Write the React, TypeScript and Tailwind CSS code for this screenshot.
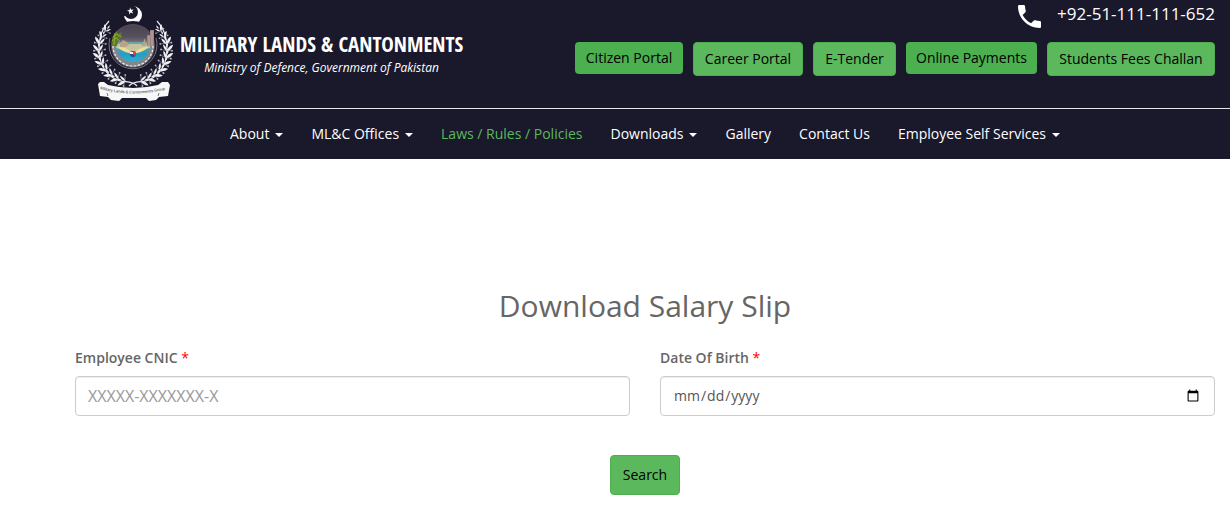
import type { ReactNode } from "react";

const portals = [
  { label: "Citizen Portal", flat: true, width: "min-w-[108px]" },
  { label: "Career Portal", flat: false, width: "min-w-[110px]" },
  { label: "E-Tender", flat: false, width: "min-w-[83px]" },
  { label: "Online Payments", flat: true, width: "min-w-[131px]" },
  { label: "Students Fees Challan", flat: false, width: "min-w-[168px]" },
];

const menu = [
  { label: "About", dropdown: true },
  { label: "ML&C Offices", dropdown: true },
  { label: "Laws / Rules / Policies", active: true },
  { label: "Downloads", dropdown: true },
  { label: "Gallery" },
  { label: "Contact Us" },
  { label: "Employee Self Services", dropdown: true },
];

const sprigs = Array.from({ length: 10 }, (_, i) => {
  const angle = 104 + i * 12.5;
  const rad = (angle * Math.PI) / 180;
  return {
    x: 42 + Math.cos(rad) * 34,
    y: 46 + Math.sin(rad) * 32,
    angle: angle + 90,
    size: i > 7 ? 0.8 : 1,
  };
});

const Branch = () => (
  <g>
    <path
      d="M46 82C40 75 32 80 24 75C12 68 8 56 8 45C8 35 11 24 18 17"
      fill="none"
      stroke="#e8e8ee"
      strokeWidth="1.200"
    />
    {sprigs.map(({ x, y, angle, size }, i) => (
      <g key={i} transform={`translate(${x} ${y}) rotate(${angle}) scale(${size})`} fill="#f1f1f5">
        <path d="M-1 0Q1 -5 6 -6Q5 -1 -1 0Z" />
        <path d="M-1 0Q2 4 6 4Q4 0 -1 0Z" />
        <path d="M3 0Q6 -2 9 0Q6 2 3 0Z" />
        <circle cx="0" cy="-5" r="1" fill="#b9b8c2" />
        <circle cx="1" cy="6" r="0.900" fill="#b9b8c2" />
        <path d="M0 0L0 -5M0 0L1 6" stroke="#b9b8c2" strokeWidth="0.500" />
      </g>
    ))}
  </g>
);

const Emblem = () => (
  <svg viewBox="0 0 84 100" className="h-[100px] w-[84px] shrink-0" aria-hidden="true">
    <defs>
      <clipPath id="disc">
        <circle cx="42" cy="42" r="21" />
      </clipPath>
      <clipPath id="basin">
        <circle cx="42" cy="41" r="17" />
      </clipPath>
      <linearGradient id="sky" x1="0" y1="0" x2="0" y2="1">
        <stop offset="0" stopColor="#4b4150" />
        <stop offset="0.600" stopColor="#57505e" />
        <stop offset="1" stopColor="#8d8e94" />
      </linearGradient>
      <linearGradient id="water" x1="0" y1="0" x2="0" y2="1">
        <stop offset="0" stopColor="#76a5ad" />
        <stop offset="0.500" stopColor="#249fc4" />
        <stop offset="1" stopColor="#38b4d3" />
      </linearGradient>
    </defs>
    <circle cx="42" cy="11" r="9" fill="#fff" />
    <circle cx="40" cy="8" r="7" fill="#1a182b" />
    <path d="M33 2h10v3H33zM32 3h4v9h-4z" fill="#1a182b" />
    <path
      d="M39 3.500l1.200 2.300 2.600-.4-1.800 1.900 1.200 2.300-2.400-1.100-1.800 1.900.3-2.600-2.300-1.200 2.600-.5z"
      fill="#fff"
    />
    <Branch />
    <g transform="translate(84 0) scale(-1 1)">
      <Branch />
    </g>
    <circle cx="42" cy="42" r="25" fill="#1a182b" />
    <path d="M19 34A24 24 0 1 0 65 34" fill="none" stroke="#77757e" strokeWidth="1" />
    <circle cx="42" cy="42" r="22" fill="#55505c" />
    <g clipPath="url(#disc)">
      <rect x="20" y="20" width="44" height="22" fill="url(#sky)" />
      <rect x="20" y="42" width="44" height="24" fill="#85868c" />
    </g>
    <path
      d="M22 42A20 20 0 0 0 62 42"
      fill="none"
      stroke="#eee"
      strokeWidth="1.200"
      strokeDasharray="2.500 1.500"
    />
    <g clipPath="url(#basin)">
      <rect x="24" y="38" width="36" height="24" fill="url(#water)" />
      <path d="M25 40h34v4l-10 2-7 2-8-2-9-2z" fill="#c8c4a0" />
      <path d="M29 39l3-3 4 2 2 3-4 2h-5zM50 42l2-3 2-5 1 8z" fill="#b7a389" />
    </g>
    <path d="M27 43q8 0 13 5h4q5-5 13-5-3 4-11 6h-8q-8-2-11-6z" fill="#efdf91" />
    <path d="M21 42c-1-7 1-12 5-15l1 3 4-2-1 3 2 2-4 1-2 8z" fill="#5f7b27" />
    <path d="M22 33l4-3 4 3M21 37l4-3 4 3M24 29l-1 12" fill="none" stroke="#91a63a" strokeWidth="1" />
    <path d="M56 42V31h3v-5h4v16z" fill="#9b817f" />
    <path d="M58 32v10M61 27v15" stroke="#c7a8a0" strokeWidth="1" />
    <circle cx="42" cy="50" r="3" fill="#254a9f" />
    <path d="M42 47a3 3 0 0 1 2 5l-2-2z" fill="#d84942" />
    <path d="M39 48h3v2h-3z" fill="#f3f3f3" />
    <path d="M9 78h4l4 3q25 6 50 0l4-3h6l2 3-2 11-9 1-3 3-7 1-3-3H31l-3 3-8-1-3-3-8-1-2-12z" fill="#f7f7f7" />
    <path d="M17 92l-1-3M67 92l1-3" stroke="#777580" strokeWidth="1" />
    <path id="motto" d="M9 85q33 9 68 0" fill="none" />
    <text fontSize="4" fill="#333" fontFamily="Liberation Sans">
      <textPath href="#motto">Military Lands &amp; Cantonments Group</textPath>
    </text>
  </svg>
);

const PhoneIcon = () => (
  <svg viewBox="3 3 18 18" className="h-[23px] w-[23px]" fill="#fff" aria-hidden="true">
    <path d="M6.620 10.790c1.440 2.830 3.760 5.140 6.590 6.590l2.200-2.200c.27-.27.67-.36 1.020-.24 1.120.37 2.330.57 3.570.57.55 0 1 .45 1 1V20c0 .55-.45 1-1 1-9.390 0-17-7.610-17-17 0-.55.45-1 1-1h3.500c.55 0 1 .45 1 1 0 1.250.2 2.450.57 3.570.11.35.03.74-.25 1.020l-2.200 2.200z" />
  </svg>
);

const Field = ({ id, label, children }: { id: string; label: string; children: ReactNode }) => (
  <div>
    <label htmlFor={id} className="mb-2 block text-sm leading-5 font-semibold">
      {label} <span className="font-normal text-[#ff0000]">*</span>
    </label>
    {children}
  </div>
);

const inputStyle =
  "block h-10 w-full rounded border border-[#ccc] bg-white px-3 text-[#555] shadow-[inset_0_1px_1px_rgba(0,0,0,0.075)] placeholder:text-[#999]";

export default function App() {
  return (
    <div className="bg-white font-['Open_Sans',sans-serif] text-[#666]">
      <header className="bg-[#1a182b] text-white">
        <div className="flex h-[108px] justify-between pr-[15px] pl-[91px]">
          <a href="#" className="flex items-start gap-[5px] pt-1">
            <Emblem />
            <span className="block pt-[26px] text-center whitespace-nowrap">
              <span className="block font-['Open_Sans_Condensed','Roboto_Condensed',Lato,sans-serif] text-[21px] leading-7 font-bold">
                MILITARY LANDS &amp; CANTONMENTS
              </span>
              <span className="block font-['Open_Sans',sans-serif] text-xs leading-5 italic">
                Ministry of Defence, Government of Pakistan
              </span>
            </span>
          </a>
          <div className="flex flex-col items-end">
            <a href="tel:+9251111111652" className="flex h-[42px] gap-4">
              <span className="pt-[5px]">
                <PhoneIcon />
              </span>
              <span className="pt-[2px] text-[17px] leading-6 font-medium">+92-51-111-111-652</span>
            </a>
            <div className="flex items-start gap-[10px]">
              {portals.map(({ label, flat, width }) => (
                <button
                  key={label}
                  className={`rounded text-sm leading-5 whitespace-nowrap text-black ${width} ${
                    flat ? "h-8 bg-[#4caf50]" : "h-[34px] border border-[#4cae4c] bg-[#5cb85c]"
                  }`}
                >
                  {label}
                </button>
              ))}
            </div>
          </div>
        </div>
        <nav className="flex h-[51px] justify-center gap-7 border-t border-[#e7e7e7] pl-[60px] text-sm leading-[50px] font-medium whitespace-nowrap">
          {menu.map(({ label, dropdown, active }) => (
            <a key={label} href="#" className={active ? "text-[#5cb85c]" : "text-white"}>
              {label}
              {dropdown && (
                <span className="ml-[6px] inline-block border-x-4 border-t-4 border-x-transparent align-middle" />
              )}
            </a>
          ))}
        </nav>
      </header>

      <main className="pt-[127px] pr-[15px] pb-8 pl-[75px]">
        <h1 className="text-center text-[30px] leading-10 font-medium">Download Salary Slip</h1>
        <form>
          <div className="mt-[22px] grid grid-cols-2 gap-[30px]">
            <Field id="cnic" label="Employee CNIC">
              <input
                id="cnic"
                type="text"
                placeholder="XXXXX-XXXXXXX-X"
                className={`${inputStyle} text-base`}
              />
            </Field>
            <Field id="dob" label="Date Of Birth">
              <input id="dob" type="date" className={`${inputStyle} text-sm`} />
            </Field>
          </div>
          <div className="mt-[39px] text-center">
            <button
              type="button"
              className="h-10 rounded border border-[#4cae4c] bg-[#5cb85c] px-3 text-sm text-black"
            >
              Search
            </button>
          </div>
        </form>
      </main>
    </div>
  );
}
